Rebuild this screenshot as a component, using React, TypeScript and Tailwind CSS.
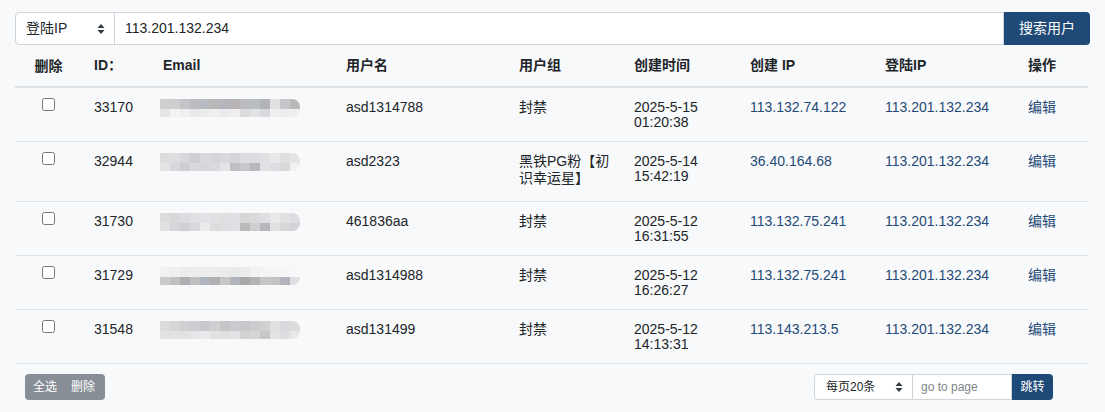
import React from "react";

type Row = {
  id: string;
  name: string;
  group: string;
  date: string;
  time: string;
  createIp: string;
  loginIp: string;
  blur: string[][];
};

const ROWS: Row[] = [
  {
    id: "33170",
    name: "asd1314788",
    group: "封禁",
    date: "2025-5-15",
    time: "01:20:38",
    createIp: "113.132.74.122",
    loginIp: "113.201.132.234",
    blur: [
      ["#cfcfcf", "#cdcfcf", "#c3c4c9", "#bdbdc1", "#b8bcc2", "#b9b7b8", "#b3b7bd", "#b9b5b5", "#bbbcc0", "#b8bdc1", "#b3b3b7", "#e0e1e1", "#c6c6cb", "#bcb8b9"],
      ["#e6e6e6", "#f3f3f3", "#efeff0", "#e8e9e8", "#ececee", "#eeefee", "#e9eaec", "#eeeeef", "#dcdcdd", "#e2e3e5", "#d8d9dc", "#efeff1", "#ededee", "#eeefee"],
    ],
  },
  {
    id: "32944",
    name: "asd2323",
    group: "黑铁PG粉【初识幸运星】",
    date: "2025-5-14",
    time: "15:42:19",
    createIp: "36.40.164.68",
    loginIp: "113.201.132.234",
    blur: [
      ["#dcdcdf", "#dedee0", "#d8d8dc", "#cfcfd3", "#d8d9dd", "#d4d6da", "#dadadd", "#d3d4d8", "#dcdde0", "#dcdde0", "#dfe0e1", "#e8e9ea", "#dfdfe2", "#e4e4e6"],
      ["#e4e4e6", "#d7d8dc", "#cdced2", "#d9dade", "#d6d7db", "#d9dadd", "#e3e4e6", "#bfc0c4", "#c6c8cc", "#b8b9bd", "#e0e1e3", "#dcdde0", "#dad9da", "#f1f1f2"],
    ],
  },
  {
    id: "31730",
    name: "461836aa",
    group: "封禁",
    date: "2025-5-12",
    time: "16:31:55",
    createIp: "113.132.75.241",
    loginIp: "113.201.132.234",
    blur: [
      ["#dcdcde", "#d8d9db", "#dcdde0", "#e0e0e2", "#e2e3e6", "#e0e1e3", "#dedfe1", "#dfe0e3", "#d6d6d8", "#d9dadc", "#dedfe1", "#e8e8ea", "#e0e0e2", "#dcdde0"],
      ["#e2e2e4", "#d5d6d9", "#cfd0d3", "#d7d9dc", "#ebebed", "#dcdcde", "#dedee0", "#dfe0e3", "#b9b9bb", "#cfcfd1", "#b7b8bf", "#e1e1e3", "#d8d8da", "#d2d3d8"],
    ],
  },
  {
    id: "31729",
    name: "asd1314988",
    group: "封禁",
    date: "2025-5-12",
    time: "16:26:27",
    createIp: "113.132.75.241",
    loginIp: "113.201.132.234",
    blur: [
      ["#f1f1f2", "#eeeff0", "#ececee", "#eceded", "#ededee", "#ecedee", "#ebebec", "#e8e9eb", "#ececed", "#f2f2f3", "#f4f4f5", "#f4f5f6", "#f5f5f6", "#f7f8f9"],
      ["#cbcbcc", "#bfc1c1", "#aeafb3", "#c1bfc0", "#b0b5bd", "#b0aeae", "#c6c6c6", "#b1b6bd", "#a9a9ab", "#b2b4b5", "#c5c6c7", "#c3c4c5", "#b2b3bb", "#dddfe1"],
    ],
  },
  {
    id: "31548",
    name: "asd131499",
    group: "封禁",
    date: "2025-5-12",
    time: "14:13:31",
    createIp: "113.143.213.5",
    loginIp: "113.201.132.234",
    blur: [
      ["#dcdcde", "#d6d6d8", "#cfd0d2", "#cccdd0", "#c8c9cc", "#cfd0d2", "#c6c6c8", "#c9cacd", "#c7c8cb", "#cbccce", "#d1d1d3", "#dfe0e2", "#d8d9dc", "#dcdcdd"],
      ["#e2e2e3", "#e3e3e5", "#e1e1e3", "#e6e6e8", "#e9eaec", "#e2e2e4", "#dfdfe1", "#e3e3e5", "#d1d1d2", "#d3d5d7", "#c7c7ca", "#e3e3e5", "#dedee0", "#e8e8ea"],
    ],
  },
];

const FONT = "font-['Liberation_Sans','Noto_Sans_CJK_SC',sans-serif]";

function UpDown() {
  return (
    <svg width="8" height="12" viewBox="0 0 8 12" className="shrink-0">
      <path d="M4 1 L7.5 5 H0.5 Z" fill="#343a40" />
      <path d="M4 11 L7.5 7 H0.5 Z" fill="#343a40" />
    </svg>
  );
}

function Blur({ rows }: { rows: string[][] }) {
  return (
    <div className="flex flex-col w-[140px] rounded-r-[8px] overflow-hidden">
      <div className="flex h-[10px]">
        {rows[0].map((c, i) => (
          <div key={i} className="w-[10px] h-full" style={{ background: c }} />
        ))}
      </div>
      <div className="flex h-[8px]">
        {rows[1].map((c, i) => (
          <div key={i} className="w-[10px] h-full" style={{ background: c }} />
        ))}
      </div>
    </div>
  );
}

export default function App() {
  return (
    <div className={`${FONT} w-[1105px] h-[412px] bg-[#f8f9fa] text-[#212529] text-[14px] px-[15px] pt-[12px] overflow-hidden`}>
      {/* search bar */}
      <div className="flex h-[33px]">
        <div className="w-[100px] flex items-center justify-between pl-[10px] pr-[9px] bg-white border border-[#ced4da] rounded-l-[4px]">
          <span>登陆IP</span>
          <UpDown />
        </div>
        <div className="flex-1 flex items-center pl-[10px] bg-white border-y border-r border-[#ced4da]">
          113.201.132.234
        </div>
        <button className="w-[86px] bg-[#1f4a77] text-white rounded-r-[4px]">搜索用户</button>
      </div>

      {/* table */}
      <table className="table-fixed border-collapse w-[1073px]">
        <colgroup>
          <col className="w-[67px]" />
          <col className="w-[66px]" />
          <col className="w-[186px]" />
          <col className="w-[173px]" />
          <col className="w-[115px]" />
          <col className="w-[116px]" />
          <col className="w-[135px]" />
          <col className="w-[143px]" />
          <col className="w-[72px]" />
        </colgroup>
        <thead>
          <tr className="border-b-2 border-[#dee2e6] font-bold text-left">
            <th className="text-center pt-[14px] pb-[12px] leading-[15px]">删除</th>
            <th className="px-[12px] leading-[15px]">ID：</th>
            <th className="px-[15px] leading-[15px]">Email</th>
            <th className="px-[12px] leading-[15px]">用户名</th>
            <th className="px-[12px] leading-[15px]">用户组</th>
            <th className="px-[12px] leading-[15px]">创建时间</th>
            <th className="px-[12px] leading-[15px]">创建 IP</th>
            <th className="px-[12px] leading-[15px]">登陆IP</th>
            <th className="px-[12px] leading-[15px]">操作</th>
          </tr>
        </thead>
        <tbody>
          {ROWS.map((r) => (
            <tr key={r.id} className="border-b border-[#dee2e6] align-top leading-[15px]">
              <td className="text-center pt-[10px]">
                <input type="checkbox" className="w-[13px] h-[13px] align-top" />
              </td>
              <td className="px-[12px] pt-[12px]">{r.id}</td>
              <td className="px-[12px] pt-[11px]">
                <Blur rows={r.blur} />
              </td>
              <td className="px-[12px] pt-[12px]">{r.name}</td>
              <td className="px-[12px] pt-[11px] pb-[14px] leading-[17px]">{r.group}</td>
              <td className="px-[12px] pt-[12px] pb-[11px]">
                {r.date}
                <br />
                {r.time}
              </td>
              <td className="px-[12px] pt-[12px] text-[#1f4a77]">{r.createIp}</td>
              <td className="px-[12px] pt-[12px] text-[#1f4a77]">{r.loginIp}</td>
              <td className="px-[12px] pt-[12px] text-[#1f4a77]">编辑</td>
            </tr>
          ))}
        </tbody>
      </table>

      {/* footer */}
      <div className="flex items-center justify-between mt-[10px] pl-[10px] pr-[37px] text-[12px]">
        <div className="flex h-[26px] rounded-[4px] overflow-hidden bg-[#878e96] text-white">
          <button className="pl-[8px] pr-[8px]">全选</button>
          <button className="pl-[6px] pr-[10px]">删除</button>
        </div>
        <div className="flex h-[26px]">
          <div className="w-[99px] flex items-center justify-between pl-[11px] pr-[9px] bg-white border border-[#ced4da] rounded-l-[4px]">
            <span>每页20条</span>
            <UpDown />
          </div>
          <div className="w-[99px] flex items-center pl-[8px] bg-white border-y border-r border-[#ced4da] text-[#7d848b]">
            go to page
          </div>
          <button className="w-[41px] bg-[#1f4a77] text-white rounded-r-[4px]">跳转</button>
        </div>
      </div>
    </div>
  );
}
